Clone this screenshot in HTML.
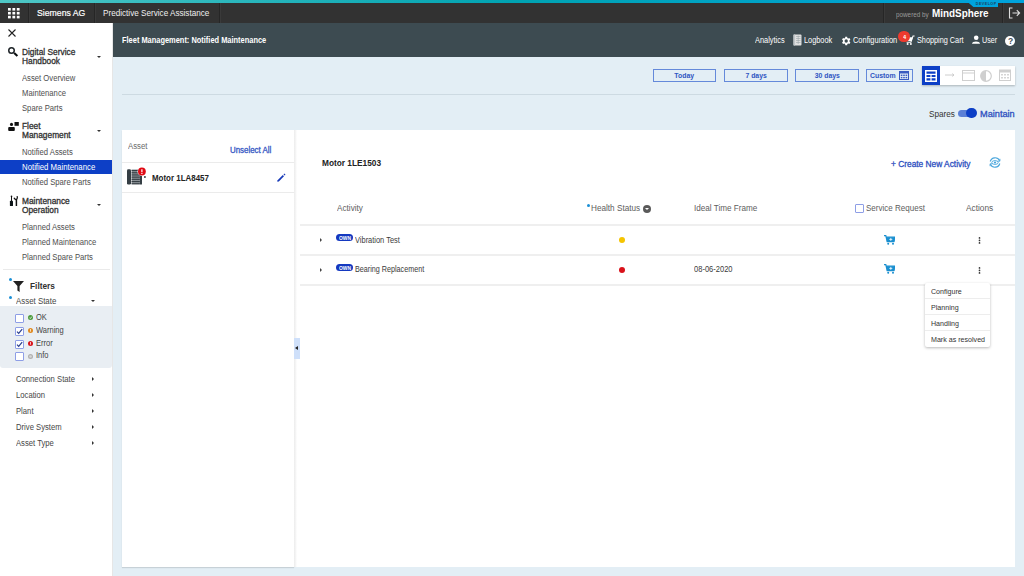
<!DOCTYPE html>
<html><head><meta charset="utf-8">
<style>
*{margin:0;padding:0;box-sizing:border-box}
html,body{width:1024px;height:576px;overflow:hidden;background:#e3eef5;font-family:"Liberation Sans",sans-serif;position:relative}
.a{position:absolute;white-space:nowrap;line-height:1}
.caret{position:absolute;width:0;height:0;border-left:2.5px solid transparent;border-right:2.5px solid transparent;border-top:2.5px solid #333}
.rarr{position:absolute;width:0;height:0;border-top:2px solid transparent;border-bottom:2px solid transparent;border-left:2.5px solid #333}
.bx{position:absolute;border:1px solid #6489da}
.hl{position:absolute;height:2px;background:#efefef}
</style></head><body>

<div class="a" style="left:0;top:0;width:1024px;height:23px;background:#323232"></div>
<div class="a" style="left:0;top:0;width:1024px;height:2.5px;background:linear-gradient(90deg,#4fc7c5,#00a3b2 50%,#00a2dc)"></div>
<div class="a" style="left:28px;top:2.5px;width:1px;height:20.5px;background:#262626"></div><div class="a" style="left:29px;top:2.5px;width:1px;height:20.5px;background:#3a3a3a"></div>
<div class="a" style="left:94px;top:2.5px;width:1px;height:20.5px;background:#262626"></div><div class="a" style="left:95px;top:2.5px;width:1px;height:20.5px;background:#3a3a3a"></div>
<div class="a" style="left:219px;top:2.5px;width:1px;height:20.5px;background:#262626"></div><div class="a" style="left:220px;top:2.5px;width:1px;height:20.5px;background:#3a3a3a"></div>
<div class="a" style="left:883px;top:2.5px;width:1px;height:20.5px;background:#262626"></div><div class="a" style="left:884px;top:2.5px;width:1px;height:20.5px;background:#3a3a3a"></div>
<div class="a" style="left:1002px;top:2.5px;width:1px;height:20.5px;background:#262626"></div><div class="a" style="left:1003px;top:2.5px;width:1px;height:20.5px;background:#3a3a3a"></div>
<svg class="a" style="left:8px;top:8px" width="12" height="11" viewBox="0 0 12 11"><g fill="#fff"><rect x="0.0" y="0.0" width="2.8" height="2.6"/><rect x="4.4" y="0.0" width="2.8" height="2.6"/><rect x="8.8" y="0.0" width="2.8" height="2.6"/><rect x="0.0" y="3.9" width="2.8" height="2.6"/><rect x="4.4" y="3.9" width="2.8" height="2.6"/><rect x="8.8" y="3.9" width="2.8" height="2.6"/><rect x="0.0" y="7.8" width="2.8" height="2.6"/><rect x="4.4" y="7.8" width="2.8" height="2.6"/><rect x="8.8" y="7.8" width="2.8" height="2.6"/></g></svg>
<div class="a" style="left:37.4px;top:8.42px;font-size:9.74px;font-weight:normal;color:#fff;transform:scaleX(0.8929);transform-origin:0 0;-webkit-text-stroke:0.2px #fff">Siemens AG</div>
<div class="a" style="left:103px;top:8.13px;font-size:9.62px;font-weight:normal;color:#f0f0f0;transform:scaleX(0.8475);transform-origin:0 0;">Predictive Service Assistance</div>
<div class="a" style="left:966px;top:0;width:32px;height:7.2px;background:#00a2dc;clip-path:polygon(0 0,100% 0,100% 100%,24% 100%,7% 35%,0 35%)"></div>
<div class="a" style="left:975.8px;top:2.56px;font-size:3.70px;font-weight:bold;color:#1a4660;transform:scaleX(1.0000);transform-origin:0 0;letter-spacing:0.45px">DEVELOP</div>
<div class="a" style="left:895.7px;top:11.92px;font-size:6.92px;font-weight:normal;color:#9a9a9a;transform:scaleX(0.9174);transform-origin:0 0;">powered by</div>
<div class="a" style="left:932.3px;top:8.23px;font-size:10.79px;font-weight:bold;color:#fff;transform:scaleX(0.9174);transform-origin:0 0;">MindSphere</div>
<svg class="a" style="left:1008px;top:7px" width="13" height="12" viewBox="0 0 13 12"><path d="M4.5 1H1.5V11H4.5" fill="none" stroke="#ddd" stroke-width="1.1"/><path d="M4.5 6H11.5M8.8 3.2L11.6 6L8.8 8.8" fill="none" stroke="#ddd" stroke-width="1.1"/></svg>
<div class="a" style="left:113px;top:23px;width:911px;height:33.6px;background:#3d4b51"></div>
<div class="a" style="left:122px;top:35.91px;font-size:8.34px;font-weight:bold;color:#fff;transform:scaleX(0.8929);transform-origin:0 0;">Fleet Management: Notified Maintenance</div>
<div class="a" style="left:754.7px;top:36.25px;font-size:8.88px;font-weight:normal;color:#fff;transform:scaleX(0.8333);transform-origin:0 0;">Analytics</div>
<svg class="a" style="left:793px;top:34px" width="9" height="12" viewBox="0 0 9 12"><rect x="0.5" y="0.5" width="8" height="11" rx="1" fill="#e0e0e0"/><rect x="0.5" y="0.5" width="1.6" height="11" fill="#bfc5c8"/><g stroke="#9aa4a8" stroke-width="0.6"><path d="M3 2.5H7.5M3 4.5H7.5M3 6.5H7.5M3 8.5H7.5M5.2 1.5V10"/></g></svg>
<div class="a" style="left:804px;top:36.30px;font-size:8.82px;font-weight:normal;color:#fff;transform:scaleX(0.8333);transform-origin:0 0;">Logbook</div>
<svg class="a" style="left:840.5px;top:35.5px" width="10" height="10" viewBox="0 0 24 24"><path fill="#fff" d="M20.1 13.2a8 8 0 0 0 0-2.4l2.4-1.9-2.3-4-2.9 1.1a8 8 0 0 0-2.1-1.2L14.8 1.9h-4.6l-.4 2.9a8 8 0 0 0-2.1 1.2L4.8 4.9l-2.3 4 2.4 1.9a8 8 0 0 0 0 2.4l-2.4 1.9 2.3 4 2.9-1.1a8 8 0 0 0 2.1 1.2l.4 2.9h4.6l.4-2.9a8 8 0 0 0 2.1-1.2l2.9 1.1 2.3-4zM12.5 16a4 4 0 1 1 0-8 4 4 0 0 1 0 8z"/></svg>
<div class="a" style="left:852.5px;top:36.20px;font-size:8.94px;font-weight:normal;color:#fff;transform:scaleX(0.8333);transform-origin:0 0;">Configuration</div>
<svg class="a" style="left:905px;top:35px" width="10" height="10" viewBox="0 0 10 10"><path d="M9.6 1H8L5.9 7.2H1.6" fill="none" stroke="#fff" stroke-width="1.1"/><path d="M0.8 2.2H7.9L6.6 6H1.8Z" fill="#fff"/><circle cx="2.6" cy="9" r="1" fill="#fff"/><circle cx="5.9" cy="9" r="1" fill="#fff"/></svg>
<div class="a" style="left:898.3px;top:30.6px;width:11.7px;height:11.7px;border-radius:50%;background:#ee3a2e"></div>
<div class="a" style="left:902.6px;top:33.71px;font-size:6.10px;font-weight:bold;color:#fff;transform:scaleX(0.9174);transform-origin:0 0;">4</div>
<div class="a" style="left:916.8px;top:36.35px;font-size:8.76px;font-weight:normal;color:#fff;transform:scaleX(0.8333);transform-origin:0 0;">Shopping Cart</div>
<svg class="a" style="left:972px;top:35.3px" width="8" height="9" viewBox="0 0 8 9"><circle cx="4.2" cy="2.7" r="2.3" fill="#fff"/><path d="M0 8.7C0 5.7 8 5.7 8 8.7Z" fill="#fff"/></svg>
<div class="a" style="left:982.3px;top:36.46px;font-size:8.64px;font-weight:normal;color:#fff;transform:scaleX(0.8333);transform-origin:0 0;">User</div>
<div class="a" style="left:1005.4px;top:35.8px;width:10px;height:10px;border-radius:50%;background:#fff"></div>
<div class="a" style="left:1007.8px;top:36.92px;font-size:9.27px;font-weight:bold;color:#3d4b51;transform:scaleX(0.9174);transform-origin:0 0;">?</div>
<div class="a" style="left:0;top:23px;width:113px;height:553px;background:#fff;border-right:1px solid #e6e6e6"></div>
<svg class="a" style="left:7.5px;top:28.5px" width="8" height="8" viewBox="0 0 8 8"><path d="M0.5 0.5L7.5 7.5M7.5 0.5L0.5 7.5" stroke="#222" stroke-width="1.1"/></svg>
<svg class="a" style="left:8px;top:46px" width="11" height="11" viewBox="0 0 11 11"><circle cx="3.5" cy="4.4" r="2.75" fill="none" stroke="#1e2428" stroke-width="1.5"/><path d="M6.2 7L9.4 10" stroke="#0a0e10" stroke-width="2.1"/></svg>
<div class="a" style="left:22px;top:48.12px;font-size:8.68px;font-weight:normal;color:#303030;transform:scaleX(0.9615);transform-origin:0 0;-webkit-text-stroke:0.3px #303030">Digital Service</div>
<div class="a" style="left:22px;top:57.42px;font-size:8.68px;font-weight:normal;color:#303030;transform:scaleX(0.9615);transform-origin:0 0;-webkit-text-stroke:0.3px #303030">Handbook</div>
<div class="caret" style="left:97px;top:56px"></div>
<div class="a" style="left:22px;top:73.87px;font-size:8.39px;font-weight:normal;color:#4e4e4e;transform:scaleX(0.9174);transform-origin:0 0;">Asset Overview</div>
<div class="a" style="left:22px;top:88.77px;font-size:8.39px;font-weight:normal;color:#4e4e4e;transform:scaleX(0.9174);transform-origin:0 0;">Maintenance</div>
<div class="a" style="left:22px;top:103.87px;font-size:8.39px;font-weight:normal;color:#4e4e4e;transform:scaleX(0.9174);transform-origin:0 0;">Spare Parts</div>
<svg class="a" style="left:8px;top:121px" width="11" height="11" viewBox="0 0 11 11"><circle cx="3.5" cy="3.4" r="1.55" fill="#111"/><rect x="0.2" y="6" width="6.6" height="3.9" rx="1" fill="#111"/><rect x="6.5" y="1" width="4.3" height="3.8" fill="#111"/></svg>
<div class="a" style="left:22px;top:122.02px;font-size:8.68px;font-weight:normal;color:#303030;transform:scaleX(0.9615);transform-origin:0 0;-webkit-text-stroke:0.3px #303030">Fleet</div>
<div class="a" style="left:22px;top:131.02px;font-size:8.68px;font-weight:normal;color:#303030;transform:scaleX(0.9615);transform-origin:0 0;-webkit-text-stroke:0.3px #303030">Management</div>
<div class="caret" style="left:97px;top:130px"></div>
<div class="a" style="left:22px;top:147.97px;font-size:8.39px;font-weight:normal;color:#4e4e4e;transform:scaleX(0.9174);transform-origin:0 0;">Notified Assets</div>
<div class="a" style="left:0;top:159.8px;width:112px;height:14.7px;background:#0d3fc6"></div>
<div class="a" style="left:22px;top:162.87px;font-size:8.50px;font-weight:normal;color:#fff;transform:scaleX(0.9174);transform-origin:0 0;">Notified Maintenance</div>
<div class="a" style="left:22px;top:178.07px;font-size:8.39px;font-weight:normal;color:#4e4e4e;transform:scaleX(0.9174);transform-origin:0 0;">Notified Spare Parts</div>
<svg class="a" style="left:9px;top:195px" width="10" height="12" viewBox="0 0 10 12"><rect x="2" y="1" width="1" height="5" fill="#111"/><circle cx="2.5" cy="1.4" r="0.8" fill="#111"/><rect x="0.9" y="5.8" width="3.1" height="5.3" rx="0.7" fill="#0c1418"/><path d="M5 2.8Q5.8 4.9 7.6 4.4Q8.9 3.4 8.1 1.1" fill="none" stroke="#111" stroke-width="1.3"/><path d="M7.4 4.4V11" stroke="#111" stroke-width="1.5"/></svg>
<div class="a" style="left:22px;top:196.72px;font-size:8.68px;font-weight:normal;color:#303030;transform:scaleX(0.9615);transform-origin:0 0;-webkit-text-stroke:0.3px #303030">Maintenance</div>
<div class="a" style="left:22px;top:206.02px;font-size:8.68px;font-weight:normal;color:#303030;transform:scaleX(0.9615);transform-origin:0 0;-webkit-text-stroke:0.3px #303030">Operation</div>
<div class="caret" style="left:97px;top:204px"></div>
<div class="a" style="left:22px;top:222.57px;font-size:8.39px;font-weight:normal;color:#4e4e4e;transform:scaleX(0.9174);transform-origin:0 0;">Planned Assets</div>
<div class="a" style="left:22px;top:237.67px;font-size:8.39px;font-weight:normal;color:#4e4e4e;transform:scaleX(0.9174);transform-origin:0 0;">Planned Maintenance</div>
<div class="a" style="left:22px;top:252.77px;font-size:8.39px;font-weight:normal;color:#4e4e4e;transform:scaleX(0.9174);transform-origin:0 0;">Planned Spare Parts</div>
<div class="a" style="left:3px;top:269px;width:107px;height:1px;background:#eaeaea"></div>
<div class="a" style="left:8.8px;top:277.8px;width:3px;height:3px;border-radius:50%;background:#1a8fd6"></div>
<svg class="a" style="left:13px;top:281px" width="11" height="11" viewBox="0 0 11 11"><path d="M0 0H11L6.6 5V11L4.4 9.4V5Z" fill="#222"/></svg>
<div class="a" style="left:29.8px;top:282.30px;font-size:8.47px;font-weight:bold;color:#303030;transform:scaleX(0.9804);transform-origin:0 0;">Filters</div>
<div class="a" style="left:9.3px;top:296px;width:3px;height:3px;border-radius:50%;background:#1a8fd6"></div>
<div class="a" style="left:16px;top:296.78px;font-size:8.61px;font-weight:normal;color:#464646;transform:scaleX(0.9174);transform-origin:0 0;">Asset State</div>
<div class="caret" style="left:90.5px;top:300px"></div>
<div class="a" style="left:0;top:306px;width:112px;height:62px;background:#e9eef3;border-radius:0 0 3px 3px"></div>
<div class="a" style="left:15px;top:313.7px;width:9px;height:9px;border:1px solid #8e9ee6;background:#fff;border-radius:1px"></div>
<svg class="a" style="left:28px;top:315.1px" width="5" height="5" viewBox="0 0 5 5"><circle cx="2.5" cy="2.5" r="2.5" fill="#4a9a3a"/><path d="M1.4 2.6L2.3 3.5L3.8 1.6" fill="none" stroke="#fff" stroke-width="0.8"/></svg>
<div class="a" style="left:35.8px;top:313.75px;font-size:8.18px;font-weight:normal;color:#444;transform:scaleX(0.9174);transform-origin:0 0;">OK</div>
<div class="a" style="left:15px;top:326.6px;width:9px;height:9px;border:1px solid #8e9ee6;background:#fff;border-radius:1px"></div>
<svg class="a" style="left:16px;top:327.6px" width="7" height="7" viewBox="0 0 7 7"><path d="M1 3.6L2.7 5.4L6.2 1.2" fill="none" stroke="#2b3f8f" stroke-width="1.25"/></svg>
<svg class="a" style="left:28px;top:328.0px" width="5" height="5" viewBox="0 0 5 5"><circle cx="2.5" cy="2.5" r="2.5" fill="#e08a20"/><path d="M2.5 1.1V2.9M2.5 3.4V4" stroke="#fff" stroke-width="0.8"/></svg>
<div class="a" style="left:35.8px;top:326.65px;font-size:8.18px;font-weight:normal;color:#444;transform:scaleX(0.9174);transform-origin:0 0;">Warning</div>
<div class="a" style="left:15px;top:339.5px;width:9px;height:9px;border:1px solid #8e9ee6;background:#fff;border-radius:1px"></div>
<svg class="a" style="left:16px;top:340.5px" width="7" height="7" viewBox="0 0 7 7"><path d="M1 3.6L2.7 5.4L6.2 1.2" fill="none" stroke="#2b3f8f" stroke-width="1.25"/></svg>
<svg class="a" style="left:28px;top:340.9px" width="5" height="5" viewBox="0 0 5 5"><circle cx="2.5" cy="2.5" r="2.5" fill="#d9121a"/><path d="M2.5 1.1V2.9M2.5 3.4V4" stroke="#fff" stroke-width="0.8"/></svg>
<div class="a" style="left:35.8px;top:339.55px;font-size:8.18px;font-weight:normal;color:#444;transform:scaleX(0.9174);transform-origin:0 0;">Error</div>
<div class="a" style="left:15px;top:352.4px;width:9px;height:9px;border:1px solid #8e9ee6;background:#fff;border-radius:1px"></div>
<svg class="a" style="left:28px;top:353.8px" width="5" height="5" viewBox="0 0 5 5"><circle cx="2.5" cy="2.5" r="2.5" fill="#b0b0b0"/><circle cx="2.5" cy="2.5" r="1.3" fill="#d8d8d8"/></svg>
<div class="a" style="left:35.8px;top:352.45px;font-size:8.18px;font-weight:normal;color:#444;transform:scaleX(0.9174);transform-origin:0 0;">Info</div>
<div class="a" style="left:15.6px;top:375.07px;font-size:8.39px;font-weight:normal;color:#464646;transform:scaleX(0.9174);transform-origin:0 0;">Connection State</div>
<div class="rarr" style="left:92px;top:376.9px"></div>
<div class="a" style="left:15.6px;top:391.02px;font-size:8.39px;font-weight:normal;color:#464646;transform:scaleX(0.9174);transform-origin:0 0;">Location</div>
<div class="rarr" style="left:92px;top:392.8px"></div>
<div class="a" style="left:15.6px;top:406.97px;font-size:8.39px;font-weight:normal;color:#464646;transform:scaleX(0.9174);transform-origin:0 0;">Plant</div>
<div class="rarr" style="left:92px;top:408.8px"></div>
<div class="a" style="left:15.6px;top:422.92px;font-size:8.39px;font-weight:normal;color:#464646;transform:scaleX(0.9174);transform-origin:0 0;">Drive System</div>
<div class="rarr" style="left:92px;top:424.7px"></div>
<div class="a" style="left:15.6px;top:438.87px;font-size:8.39px;font-weight:normal;color:#464646;transform:scaleX(0.9174);transform-origin:0 0;">Asset Type</div>
<div class="rarr" style="left:92px;top:440.7px"></div>
<div class="bx" style="left:653px;top:69px;width:63px;height:13px"></div>
<div class="a" style="left:653px;top:71.57px;width:63px;text-align:center;font-size:7.8px;font-weight:bold;color:#2f55c2"><span style="display:inline-block;transform:scaleX(0.88)">Today</span></div>
<div class="bx" style="left:724px;top:69px;width:64px;height:13px"></div>
<div class="a" style="left:724px;top:71.57px;width:64px;text-align:center;font-size:7.8px;font-weight:bold;color:#2f55c2"><span style="display:inline-block;transform:scaleX(0.88)">7 days</span></div>
<div class="bx" style="left:795px;top:69px;width:64px;height:13px"></div>
<div class="a" style="left:795px;top:71.57px;width:64px;text-align:center;font-size:7.8px;font-weight:bold;color:#2f55c2"><span style="display:inline-block;transform:scaleX(0.88)">30 days</span></div>
<div class="bx" style="left:866px;top:69px;width:47px;height:13px"></div>
<div class="a" style="left:869.5px;top:71.57px;font-size:7.80px;font-weight:bold;color:#2f55c2;transform:scaleX(0.8850);transform-origin:0 0;">Custom</div>
<svg class="a" style="left:899px;top:70.5px" width="10" height="9" viewBox="0 0 10 9"><rect x="0.5" y="0.5" width="9" height="8" fill="none" stroke="#3a5cc0"/><rect x="0.5" y="0.5" width="9" height="2" fill="#3a5cc0"/><g fill="#3a5cc0"><rect x="1.8" y="3.6" width="1.6" height="1.4"/><rect x="4.2" y="3.6" width="1.6" height="1.4"/><rect x="6.6" y="3.6" width="1.6" height="1.4"/><rect x="1.8" y="5.9" width="1.6" height="1.4"/><rect x="4.2" y="5.9" width="1.6" height="1.4"/><rect x="6.6" y="5.9" width="1.6" height="1.4"/></g></svg>
<div class="a" style="left:922px;top:66px;width:93px;height:19px;background:#fff;box-shadow:0 1px 2px rgba(0,0,0,0.25)"></div>
<div class="a" style="left:922px;top:66px;width:18px;height:19px;background:#0d3fc6"></div>
<svg class="a" style="left:925px;top:69.5px" width="12" height="12" viewBox="0 0 12 12"><rect x="0.75" y="0.75" width="10.5" height="10.5" fill="none" stroke="#fff" stroke-width="1.5"/><path d="M0.75 4.3H11.25M0.75 7.7H11.25M6 4.3V11.25" stroke="#fff" stroke-width="1.2"/></svg>
<svg class="a" style="left:945px;top:73px" width="10" height="4" viewBox="0 0 10 4"><path d="M0 2H9M7.2 0.6L9 2L7.2 3.4" fill="none" stroke="#c8c8c8" stroke-width="0.9"/></svg>
<svg class="a" style="left:962px;top:70px" width="13" height="11" viewBox="0 0 13 11"><rect x="0.5" y="0.5" width="12" height="10" fill="none" stroke="#cfcfcf" stroke-width="1"/><path d="M0.5 3H12.5" stroke="#cfcfcf"/></svg>
<svg class="a" style="left:980px;top:69.5px" width="12" height="12" viewBox="0 0 12 12"><circle cx="6" cy="6" r="5.3" fill="none" stroke="#cfcfcf" stroke-width="1.2"/><path d="M6 0.7A5.3 5.3 0 0 0 6 11.3Z" fill="#cfcfcf"/></svg>
<svg class="a" style="left:999px;top:69px" width="12" height="12" viewBox="0 0 12 12"><rect x="0.5" y="1" width="11" height="10.5" fill="none" stroke="#cfcfcf"/><rect x="0.5" y="1" width="11" height="2.5" fill="#cfcfcf"/><g fill="#d5d5d5"><rect x="2" y="5" width="2" height="1.5"/><rect x="5" y="5" width="2" height="1.5"/><rect x="8" y="5" width="2" height="1.5"/><rect x="2" y="8" width="2" height="1.5"/><rect x="5" y="8" width="2" height="1.5"/><rect x="8" y="8" width="2" height="1.5"/></g></svg>
<div class="a" style="left:122px;top:94px;width:893px;height:1px;background:#cddae2"></div>
<div class="a" style="left:928.5px;top:108.98px;font-size:9.43px;font-weight:normal;color:#333;transform:scaleX(0.8696);transform-origin:0 0;">Spares</div>
<div class="a" style="left:958px;top:109.5px;width:17px;height:7px;border-radius:4px;background:#5b80d6"></div>
<div class="a" style="left:966.2px;top:107.6px;width:10.6px;height:10.6px;border-radius:50%;background:#0d3fc6"></div>
<div class="a" style="left:980px;top:109.88px;font-size:9.20px;font-weight:normal;color:#2d4fc0;transform:scaleX(1.0000);transform-origin:0 0;-webkit-text-stroke:0.3px #2d4fc0">Maintain</div>
<div class="a" style="left:122px;top:130px;width:172px;height:437px;background:#fff;box-shadow:0 1px 1px rgba(0,0,0,0.12)"></div>
<div class="a" style="left:127.6px;top:141.97px;font-size:8.50px;font-weight:normal;color:#6a6a6a;transform:scaleX(0.9174);transform-origin:0 0;">Asset</div>
<div class="a" style="left:230px;top:146.82px;font-size:8.22px;font-weight:normal;color:#3558c4;transform:scaleX(0.9615);transform-origin:0 0;-webkit-text-stroke:0.3px #3558c4">Unselect All</div>
<div class="a" style="left:122px;top:162px;width:172px;height:1px;background:#ebebeb"></div>
<svg class="a" style="left:127px;top:167px" width="20" height="18" viewBox="0 0 20 18"><rect x="0" y="2.2" width="4" height="15.4" rx="1.3" fill="#353e44"/><rect x="4.6" y="2.5" width="8.2" height="14.8" fill="#8a9095"/><g fill="#353e44"><rect x="4.6" y="3" width="8.2" height="1.1"/><rect x="4.6" y="5.2" width="8.2" height="1.1"/><rect x="4.6" y="7.4" width="8.2" height="1.1"/><rect x="4.6" y="9.6" width="8.2" height="1.1"/><rect x="4.6" y="11.8" width="8.2" height="1.1"/><rect x="4.6" y="14" width="8.2" height="1.1"/><rect x="4.6" y="16.2" width="8.2" height="1.1"/></g><rect x="12.8" y="8" width="2.2" height="9.6" rx="0.6" fill="#353e44"/><rect x="17" y="9.2" width="1.8" height="1.6" fill="#353e44"/><circle cx="14.9" cy="4.5" r="4.4" fill="#fff"/><circle cx="14.9" cy="4.5" r="3.9" fill="#e00a14"/><path d="M14.9 2.2V5.3M14.9 6.1V7" stroke="#fff" stroke-width="1.2"/></svg>
<div class="a" style="left:151.7px;top:173.83px;font-size:8.67px;font-weight:bold;color:#222;transform:scaleX(0.9174);transform-origin:0 0;">Motor 1LA8457</div>
<svg class="a" style="left:277px;top:173px" width="9" height="9" viewBox="0 0 9 9"><path d="M0.3 8.7L0.6 7.2L5.8 2L7 3.2L1.8 8.4Z" fill="#1538b8"/><path d="M6.5 1.3L7.3 0.5L8.5 1.7L7.7 2.5Z" fill="#1538b8"/></svg>
<div class="a" style="left:122px;top:192px;width:172px;height:1px;background:#ebebeb"></div>
<div class="a" style="left:297px;top:130px;width:718px;height:437px;background:#fff"></div>
<div class="a" style="left:294px;top:130px;width:3px;height:437px;background:linear-gradient(90deg,#ececec,#f4f4f4 50%,#fff)"></div>
<div class="a" style="left:294px;top:338px;width:6px;height:21px;background:#cfe0fa"></div>
<div class="a" style="left:295px;top:346px;width:0;height:0;border-top:2.5px solid transparent;border-bottom:2.5px solid transparent;border-right:3.5px solid #222"></div>
<div class="a" style="left:322px;top:159.44px;font-size:8.30px;font-weight:bold;color:#222;transform:scaleX(1.0000);transform-origin:0 0;">Motor 1LE1503</div>
<div class="a" style="left:891px;top:159.89px;font-size:8.60px;font-weight:normal;color:#2d4fc0;transform:scaleX(0.9709);transform-origin:0 0;-webkit-text-stroke:0.3px #2d4fc0">+ Create New Activity</div>
<svg class="a" style="left:989px;top:157px" width="12" height="11" viewBox="0 0 12 11"><path d="M1.2 4.5A5 5 0 0 1 10.6 3.8M10.8 6.5A5 5 0 0 1 1.4 7.2" fill="none" stroke="#4aa6dc" stroke-width="1.1"/><path d="M10.9 1.8V4.2H8.6M1.1 9.2V6.8H3.4" fill="none" stroke="#4aa6dc" stroke-width="0.9"/><ellipse cx="6" cy="5.5" rx="3.2" ry="1.9" fill="none" stroke="#4aa6dc" stroke-width="0.9"/><circle cx="6" cy="5.5" r="1.1" fill="#4aa6dc"/></svg>
<div class="a" style="left:336.7px;top:203.60px;font-size:8.94px;font-weight:normal;color:#5e5e5e;transform:scaleX(0.9174);transform-origin:0 0;">Activity</div>
<div class="a" style="left:586.8px;top:203.6px;width:3px;height:3px;border-radius:50%;background:#1a8fd6"></div>
<div class="a" style="left:590.5px;top:203.50px;font-size:8.94px;font-weight:normal;color:#5e5e5e;transform:scaleX(0.9174);transform-origin:0 0;">Health Status</div>
<div class="a" style="left:643px;top:204.8px;width:8px;height:8px;border-radius:50%;background:#5a5a5a"></div>
<div class="a" style="left:645px;top:207.6px;width:0;height:0;border-left:2px solid transparent;border-right:2px solid transparent;border-top:2.4px solid #fff"></div>
<div class="a" style="left:694px;top:203.55px;font-size:8.88px;font-weight:normal;color:#5e5e5e;transform:scaleX(0.9174);transform-origin:0 0;">Ideal Time Frame</div>
<div class="a" style="left:855px;top:204.4px;width:9px;height:8.5px;border:1px solid #8e9ee6;background:#fff;border-radius:1px"></div>
<div class="a" style="left:865.8px;top:203.64px;font-size:8.77px;font-weight:normal;color:#5e5e5e;transform:scaleX(0.9174);transform-origin:0 0;">Service Request</div>
<div class="a" style="left:965.7px;top:203.61px;font-size:9.05px;font-weight:normal;color:#5e5e5e;transform:scaleX(0.9174);transform-origin:0 0;">Actions</div>
<div class="hl" style="left:300px;top:224px;width:715px"></div>
<div class="hl" style="left:300px;top:254px;width:715px"></div>
<div class="hl" style="left:300px;top:284px;width:715px"></div>
<div class="rarr" style="left:320px;top:237.8px;border-left-color:#444"></div>
<div class="a" style="left:336.2px;top:234.2px;width:16.8px;height:7.2px;border-radius:3.6px;background:#1438c0"></div>
<div class="a" style="left:338.6px;top:236.16px;font-size:5.34px;font-weight:bold;color:#fff;transform:scaleX(0.9174);transform-origin:0 0;">OWN</div>
<div class="a" style="left:354.7px;top:236.22px;font-size:8.57px;font-weight:normal;color:#3a3a3a;transform:scaleX(0.8696);transform-origin:0 0;">Vibration Test</div>
<div class="a" style="left:619px;top:236.5px;width:6px;height:6px;border-radius:50%;background:#f5c400"></div>
<svg class="a" style="left:883.7px;top:234.5px" width="11" height="10" viewBox="0 0 11 10"><path d="M0 0.7H1.8L3.2 6.6H9.8L10.8 2.2H2.4" fill="none" stroke="#1a8fd0" stroke-width="1.2"/><rect x="2.8" y="2.2" width="7.9" height="4.4" fill="#1a8fd0"/><path d="M6.8 2.9V5.9M5.3 4.4H8.3" stroke="#fff" stroke-width="0.8"/><circle cx="4.2" cy="8.8" r="1" fill="#1a8fd0"/><circle cx="9" cy="8.8" r="1" fill="#1a8fd0"/></svg>
<svg class="a" style="left:978px;top:237.0px" width="3" height="7" viewBox="0 0 3 7"><g fill="#333"><circle cx="1.5" cy="0.9" r="0.85"/><circle cx="1.5" cy="3.4" r="0.85"/><circle cx="1.5" cy="5.9" r="0.85"/></g></svg>
<div class="rarr" style="left:320px;top:267.6px;border-left-color:#444"></div>
<div class="a" style="left:336.2px;top:264.0px;width:16.8px;height:7.2px;border-radius:3.6px;background:#1438c0"></div>
<div class="a" style="left:338.6px;top:265.96px;font-size:5.34px;font-weight:bold;color:#fff;transform:scaleX(0.9174);transform-origin:0 0;">OWN</div>
<div class="a" style="left:354.7px;top:266.26px;font-size:8.28px;font-weight:normal;color:#3a3a3a;transform:scaleX(0.8696);transform-origin:0 0;">Bearing Replacement</div>
<div class="a" style="left:619px;top:266.5px;width:6px;height:6px;border-radius:50%;background:#d9121a"></div>
<div class="a" style="left:694px;top:265.80px;font-size:8.23px;font-weight:normal;color:#3a3a3a;transform:scaleX(0.9174);transform-origin:0 0;">08-06-2020</div>
<svg class="a" style="left:883.7px;top:264.3px" width="11" height="10" viewBox="0 0 11 10"><path d="M0 0.7H1.8L3.2 6.6H9.8L10.8 2.2H2.4" fill="none" stroke="#1a8fd0" stroke-width="1.2"/><rect x="2.8" y="2.2" width="7.9" height="4.4" fill="#1a8fd0"/><path d="M6.8 2.9V5.9M5.3 4.4H8.3" stroke="#fff" stroke-width="0.8"/><circle cx="4.2" cy="8.8" r="1" fill="#1a8fd0"/><circle cx="9" cy="8.8" r="1" fill="#1a8fd0"/></svg>
<svg class="a" style="left:978px;top:266.8px" width="3" height="7" viewBox="0 0 3 7"><g fill="#333"><circle cx="1.5" cy="0.9" r="0.85"/><circle cx="1.5" cy="3.4" r="0.85"/><circle cx="1.5" cy="5.9" r="0.85"/></g></svg>
<div class="a" style="left:925px;top:283px;width:65px;height:64px;background:#fff;border-radius:2px;box-shadow:0 1px 3px rgba(0,0,0,0.28)"></div>
<div class="a" style="left:930.6px;top:287.67px;font-size:7.74px;font-weight:normal;color:#333;transform:scaleX(0.9174);transform-origin:0 0;">Configure</div>
<div class="a" style="left:925px;top:298px;width:65px;height:1px;background:#ededed"></div>
<div class="a" style="left:930.6px;top:303.67px;font-size:7.74px;font-weight:normal;color:#333;transform:scaleX(0.9174);transform-origin:0 0;">Planning</div>
<div class="a" style="left:925px;top:314px;width:65px;height:1px;background:#ededed"></div>
<div class="a" style="left:930.6px;top:319.67px;font-size:7.74px;font-weight:normal;color:#333;transform:scaleX(0.9174);transform-origin:0 0;">Handling</div>
<div class="a" style="left:925px;top:330px;width:65px;height:1px;background:#ededed"></div>
<div class="a" style="left:930.6px;top:335.67px;font-size:7.74px;font-weight:normal;color:#333;transform:scaleX(0.9174);transform-origin:0 0;">Mark as resolved</div>
</body></html>
